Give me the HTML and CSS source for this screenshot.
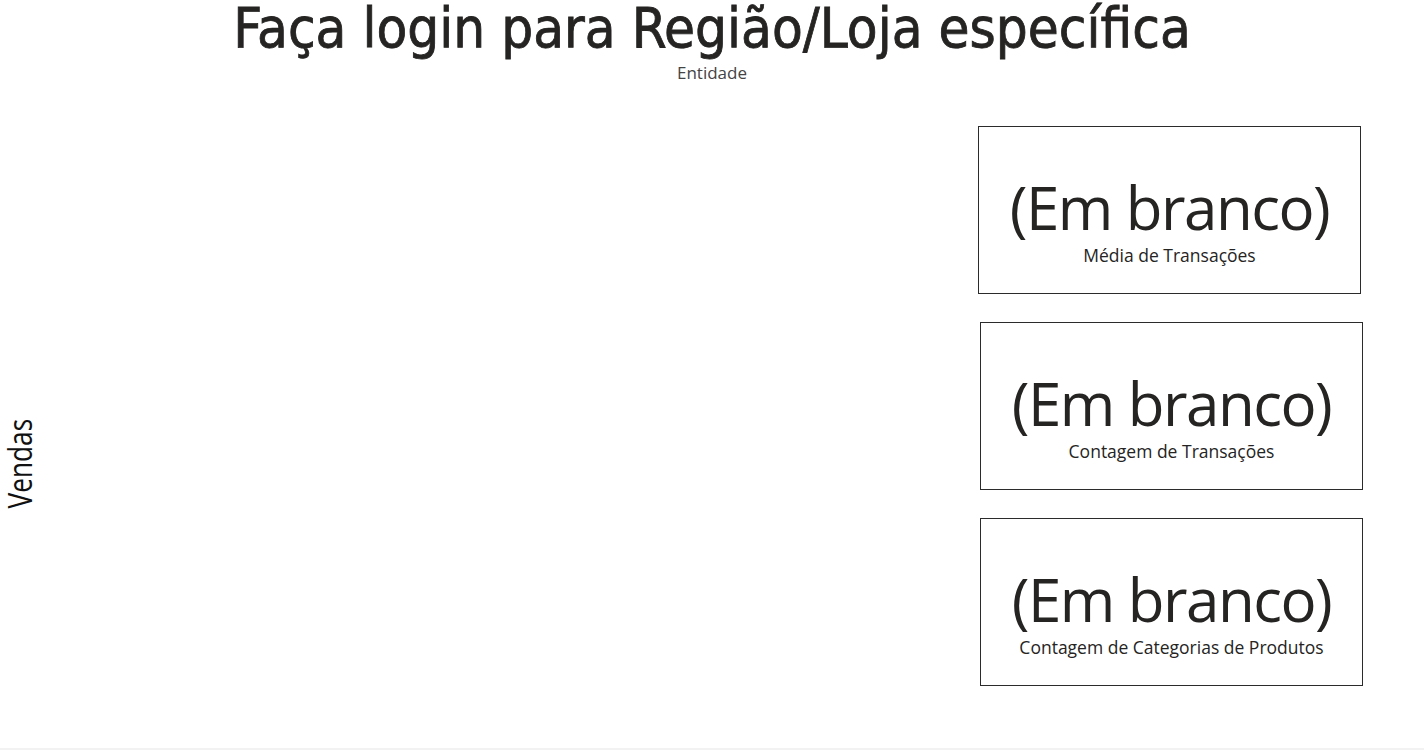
FILE: index.html
```html
<!DOCTYPE html>
<html lang="pt">
<head>
<meta charset="utf-8">
<link rel="stylesheet" href="styles.css">
</head>
<body>
<div class="page">
  <header class="header">
    <h1 class="title">Faça login para Região/Loja específica</h1>
    <div class="entity">Entidade</div>
  </header>
  <main class="main">
    <div class="axis"><span class="axis-label">Vendas</span></div>
    <div class="chart"></div>
    <div class="cards">
      <div class="card card-a">
        <div class="value">(Em branco)</div>
        <div class="label">Média de Transações</div>
      </div>
      <div class="card card-b">
        <div class="value">(Em branco)</div>
        <div class="label">Contagem de Transações</div>
      </div>
      <div class="card card-b">
        <div class="value">(Em branco)</div>
        <div class="label">Contagem de Categorias de Produtos</div>
      </div>
    </div>
  </main>
</div>
</body>
</html>
```

FILE: styles.css
```css
html, body {
  margin: 0;
  padding: 0;
  background: #fff;
}
.page {
  width: 1424px;
  height: 750px;
  display: flex;
  flex-direction: column;
  box-sizing: border-box;
  border-bottom: 2px solid #f2f2f2;
  overflow: hidden;
}
.header {
  display: flex;
  flex-direction: column;
  align-items: center;
  height: 83px;
}
.title {
  margin: 0;
  font-family: "DejaVu Sans Condensed", "DejaVu Sans", sans-serif;
  font-weight: normal;
  font-size: 56px;
  line-height: 56px;
  color: #252423;
  -webkit-text-stroke: 0.8px #252423;
  white-space: nowrap;
}
.entity {
  font-family: "Open Sans", sans-serif;
  font-size: 17px;
  line-height: 20px;
  color: #444;
  margin-top: 7px;
}
.main {
  flex: 1;
  display: flex;
  align-items: stretch;
}
.axis {
  width: 42px;
  display: flex;
  align-items: center;
  justify-content: center;
  padding-top: 96px;
}
.axis-label {
  writing-mode: vertical-rl;
  transform: rotate(180deg) scaleY(0.82);
  font-family: "Open Sans", sans-serif;
  font-size: 32px;
  line-height: 34px;
  color: #111;
  margin-left: -2px;
}
.chart {
  flex: 1;
}
.cards {
  width: 446px;
  box-sizing: border-box;
  padding-right: 61px;
  display: flex;
  flex-direction: column;
  padding-top: 43px;
  gap: 28px;
}
.card {
  width: 383px;
  height: 168px;
  box-sizing: border-box;
  border: 1px solid #2b2b2b;
  display: flex;
  flex-direction: column;
  align-items: center;
  justify-content: flex-start;
  font-family: "Open Sans", sans-serif;
  color: #252423;
  padding-top: 44px;
}
.card-b {
  margin-left: 2px;
}
.value {
  font-size: 60px;
  line-height: 72px;
  letter-spacing: -1.5px;
  white-space: nowrap;
}
.label {
  font-size: 17.5px;
  line-height: 20px;
  margin-top: 2px;
  white-space: nowrap;
}
```
